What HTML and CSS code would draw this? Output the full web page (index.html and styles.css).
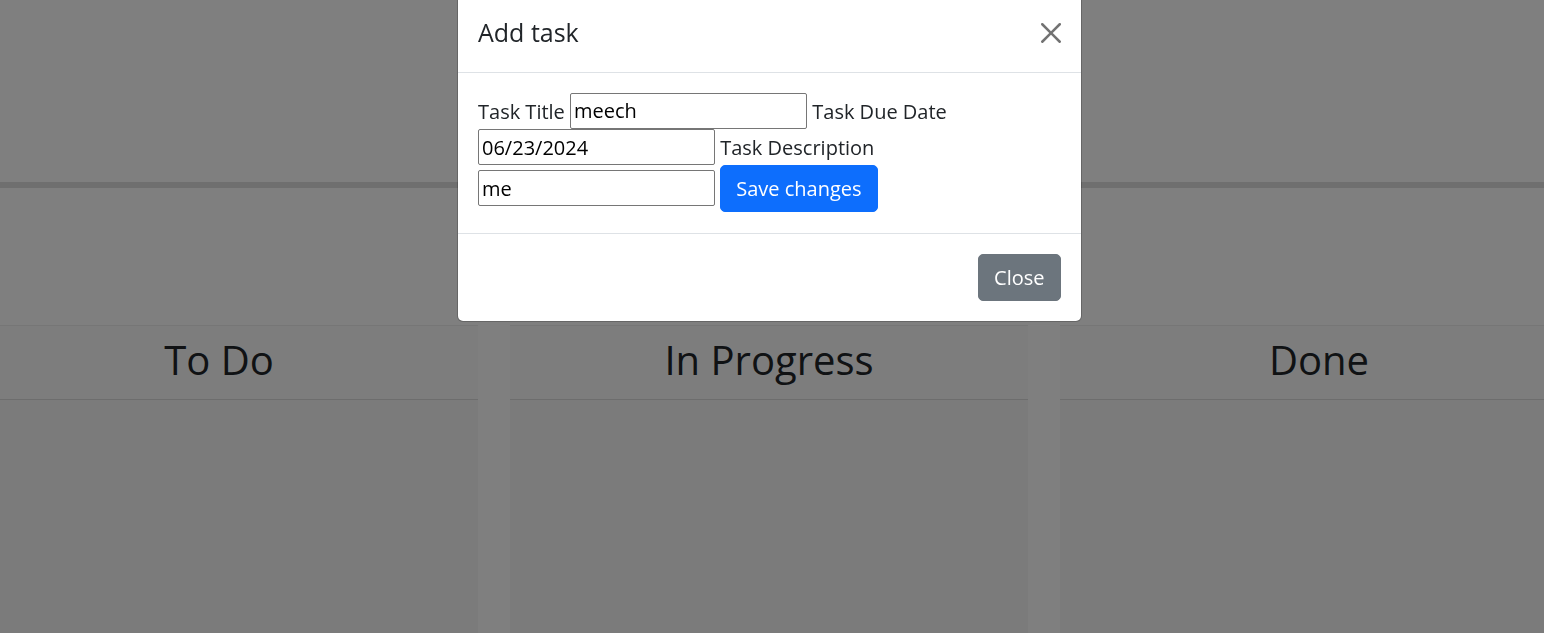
FILE: index.html
```html
<!DOCTYPE html>
<html lang="en">
<head>
<meta charset="utf-8">
<title>Task Board</title>
<link rel="stylesheet" href="styles.css">
</head>
<body>
<div class="page">
  <header class="top"></header>
  <div class="band"></div>
  <div class="spacer"></div>
  <main class="board">
    <section class="lane">
      <div class="lane-header"><h2>To Do</h2></div>
      <div class="lane-body"></div>
    </section>
    <section class="lane">
      <div class="lane-header"><h2>In Progress</h2></div>
      <div class="lane-body"></div>
    </section>
    <section class="lane">
      <div class="lane-header"><h2>Done</h2></div>
      <div class="lane-body"></div>
    </section>
  </main>
</div>

<div class="backdrop"></div>

<div class="modal">
  <div class="dialog">
    <div class="modal-header">
      <h5 class="modal-title">Add task</h5>
      <button class="btn-close" type="button" aria-label="Close">
        <svg viewBox="0 0 16 16" width="20" height="20"><path d="M.293.293a1 1 0 0 1 1.414 0L8 6.586 14.293.293a1 1 0 1 1 1.414 1.414L9.414 8l6.293 6.293a1 1 0 0 1-1.414 1.414L8 9.414l-6.293 6.293a1 1 0 0 1-1.414-1.414L6.586 8 .293 1.707a1 1 0 0 1 0-1.414z" fill="#000"/></svg>
      </button>
    </div>
    <div class="modal-body">
      <label>Task Title</label> <input class="field" type="text" value="meech"> <label>Task Due Date</label> <input class="field" type="text" value="06/23/2024"> <label>Task Description</label> <input class="field" type="text" value="me"> <button class="btn btn-primary" type="button">Save changes</button>
    </div>
    <div class="modal-footer">
      <button class="btn btn-secondary" type="button">Close</button>
    </div>
  </div>
</div>
</body>
</html>
```

FILE: styles.css
```css
html, body {
  margin: 0;
  padding: 0;
  overflow: hidden;
  background: #fff;
}

body {
  font-family: "Open Sans", "Liberation Sans", sans-serif;
  font-size: 20px;
  line-height: 1.5;
  color: #212529;
}

.page {
  width: 1544px;
  height: 633px;
  overflow: hidden;
}

.top {
  height: 182px;
}

.band {
  height: 6px;
  background: #dedede;
}

.spacer {
  height: 137px;
}

.board {
  display: flex;
  gap: 32px;
  margin-left: -40px;
}

.lane {
  flex: 0 0 518px;
  box-sizing: border-box;
  border-top: 1px solid rgba(0, 0, 0, 0.04);
  background: #f6f6f6;
  height: 400px;
}

.lane-header {
  background: #fbfbfb;
  border-bottom: 1px solid rgba(0, 0, 0, 0.125);
  padding: 10px 20px 15px;
  text-align: center;
}

.lane-header h2 {
  margin: 0;
  font-size: 40px;
  line-height: 48px;
  font-weight: 400;
  color: #212529;
}

.backdrop {
  position: fixed;
  inset: 0;
  background: rgba(0, 0, 0, 0.5);
}

.modal {
  position: fixed;
  inset: 0;
  display: flex;
  justify-content: center;
  align-items: flex-start;
  padding-right: 5px;
}

.dialog {
  width: 625px;
  box-sizing: border-box;
  margin-top: -7px;
  background: #fff;
  border: 1px solid rgba(0, 0, 0, 0.2);
  border-radius: 6px;
  background-clip: padding-box;
}

.modal-header {
  display: flex;
  align-items: center;
  justify-content: space-between;
  padding: 20px;
  border-bottom: 1px solid #dee2e6;
}

.modal-title {
  margin: 0;
  font-size: 25px;
  line-height: 37.5px;
  font-weight: 400;
  color: #212529;
}

.btn-close {
  display: block;
  width: 20px;
  height: 20px;
  padding: 0;
  margin: 0;
  border: 0;
  background: transparent;
  opacity: 0.55;
}

.btn-close svg {
  display: block;
}

.modal-body {
  padding: 20px 20px 21px;
}

.field {
  box-sizing: border-box;
  width: 237px;
  height: 36.4px;
  padding: 1px 3px;
  border: 1px solid #767676;
  border-radius: 2px;
  font-family: "Open Sans", "Liberation Sans", sans-serif;
  font-size: 20px;
  line-height: 30px;
  color: #000;
  background: #fff;
  vertical-align: baseline;
}

.btn {
  display: inline-block;
  font-family: "Open Sans", "Liberation Sans", sans-serif;
  font-size: 20px;
  line-height: 30px;
  font-weight: 400;
  padding: 7.5px 15px;
  border: 1px solid transparent;
  border-radius: 5px;
  color: #fff;
  vertical-align: baseline;
}

.btn-primary {
  background: #0d6efd;
  border-color: #0d6efd;
}

.btn-secondary {
  background: #6c757d;
  border-color: #6c757d;
  padding: 7.5px 15.5px;
}

.modal-footer {
  display: flex;
  justify-content: flex-end;
  align-items: center;
  padding: 15px;
  border-top: 1px solid #dee2e6;
}

.modal-footer .btn {
  margin: 5px;
}
```
